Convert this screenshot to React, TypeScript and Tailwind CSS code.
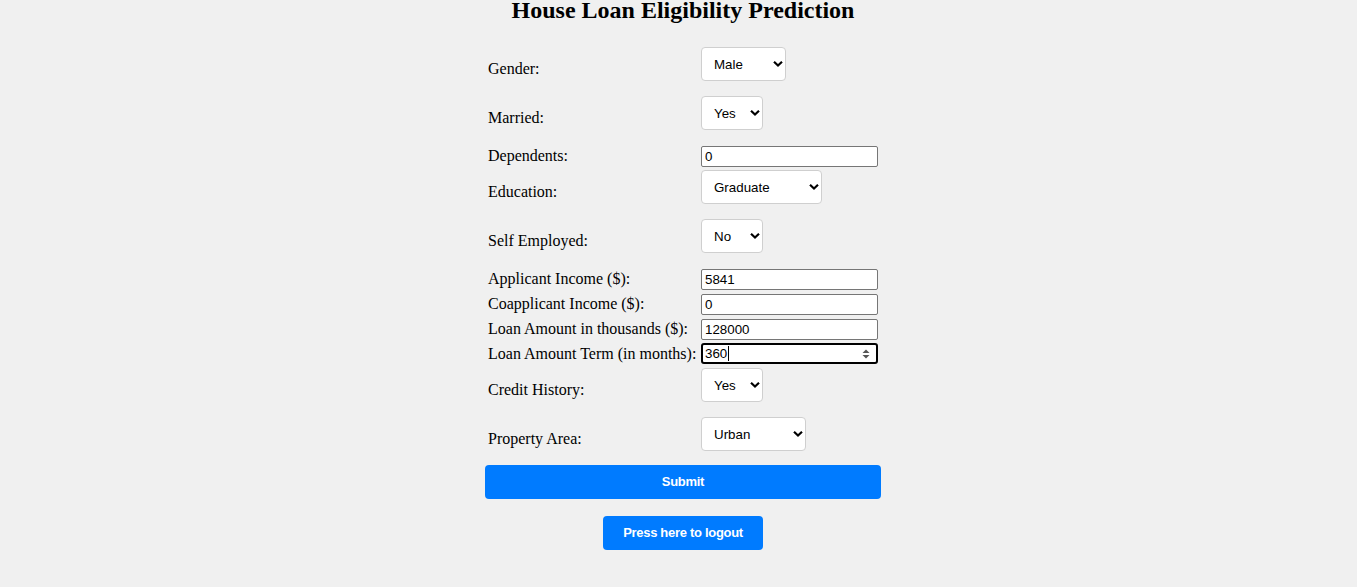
import React from "react";

function Chevron() {
  return (
    <svg
      width="10"
      height="7"
      viewBox="0 0 10 7"
      className="pointer-events-none absolute right-[3px] top-1/2 -translate-y-1/2"
    >
      <path d="M1 1.2 L5 5 L9 1.2" fill="none" stroke="#000" strokeWidth="2.2" strokeLinejoin="miter" />
    </svg>
  );
}

function SelectField({ value, options, width }: { value: string; options: string[]; width: string }) {
  return (
    <div className={`relative ${width} h-[34px]`}>
      <select
        defaultValue={value}
        className="h-[34px] w-full appearance-none rounded-[4px] border border-[#cfcfcf] bg-white pl-[12px] pr-[16px] pt-[1px] font-['Liberation_Sans',Arial,sans-serif] text-[13.33px] text-black outline-none"
      >
        {options.map((o) => (
          <option key={o}>{o}</option>
        ))}
      </select>
      <Chevron />
    </div>
  );
}

function TextField({ value }: { value: string }) {
  return (
    <input
      type="text"
      defaultValue={value}
      className="h-[21px] w-[177px] rounded-[2px] border border-[#767676] bg-white px-[3px] font-['Liberation_Sans',Arial,sans-serif] text-[13.33px] leading-[15px] text-black outline-none"
    />
  );
}

function SelectRow({ label, children }: { label: string; children: React.ReactNode }) {
  return (
    <div className="flex h-[45px]">
      <div className="flex w-[216px] items-center whitespace-nowrap pb-[1px] pl-[3px] text-[16px]">{label}</div>
      <div className="self-start">{children}</div>
    </div>
  );
}

function InputRow({ label, children }: { label: string; children: React.ReactNode }) {
  return (
    <div className="flex h-[21px] items-center">
      <div className="w-[216px] whitespace-nowrap pl-[3px] text-[16px] leading-[18px]">{label}</div>
      <div>{children}</div>
    </div>
  );
}

export default function App() {
  return (
    <div className="flow-root min-h-[587px] bg-[#f0f0f0] pl-[9px] font-['Liberation_Serif','Times_New_Roman',serif] text-black">
      <h2 className="-mt-[4px] text-center text-[24px] font-bold leading-[28px]">House Loan Eligibility Prediction</h2>
      <div className="mx-auto mt-[23px] flex w-[396px] flex-col">
        <div className="flex flex-col gap-[4px]">
          <SelectRow label="Gender:">
            <SelectField value="Male" options={["Male", "Female"]} width="w-[85px]" />
          </SelectRow>
          <SelectRow label="Married:">
            <SelectField value="Yes" options={["Yes", "No"]} width="w-[62px]" />
          </SelectRow>
          <InputRow label="Dependents:">
            <TextField value="0" />
          </InputRow>
          <SelectRow label="Education:">
            <SelectField value="Graduate" options={["Graduate", "Not Graduate"]} width="w-[121px]" />
          </SelectRow>
          <SelectRow label="Self Employed:">
            <SelectField value="No" options={["No", "Yes"]} width="w-[62px]" />
          </SelectRow>
          <InputRow label="Applicant Income ($):">
            <TextField value="5841" />
          </InputRow>
          <InputRow label="Coapplicant Income ($):">
            <TextField value="0" />
          </InputRow>
          <InputRow label="Loan Amount in thousands ($):">
            <TextField value="128000" />
          </InputRow>
          <InputRow label="Loan Amount Term (in months):">
            <div className="relative flex h-[21px] w-[177px] items-center rounded-[3px] border-2 border-black bg-white pl-[2px] font-['Liberation_Sans',Arial,sans-serif] text-[13.33px] leading-[15px]">
              <span>360</span>
              <span className="ml-[1px] inline-block h-[15px] w-[1px] bg-black" />
              <svg width="8" height="11" viewBox="0 0 8 11" className="absolute right-[6px] top-1/2 -translate-y-1/2">
                <path d="M4 1 L7.5 4.5 L0.5 4.5 Z" fill="#555" />
                <path d="M4 10 L7.5 6.5 L0.5 6.5 Z" fill="#555" />
              </svg>
            </div>
          </InputRow>
          <SelectRow label="Credit History:">
            <SelectField value="Yes" options={["Yes", "No"]} width="w-[62px]" />
          </SelectRow>
          <SelectRow label="Property Area:">
            <SelectField value="Urban" options={["Urban", "Semiurban", "Rural"]} width="w-[105px]" />
          </SelectRow>
        </div>
        <button className="mt-[3px] h-[34px] w-[396px] rounded-[4px] bg-[#007bff] font-['Liberation_Sans',Arial,sans-serif] text-[13px] font-bold tracking-[-0.3px] text-white">
          Submit
        </button>
        <button className="mx-auto mt-[17px] h-[34px] w-[160px] rounded-[4px] bg-[#007bff] font-['Liberation_Sans',Arial,sans-serif] text-[13px] font-bold tracking-[-0.3px] text-white">
          Press here to logout
        </button>
      </div>
    </div>
  );
}
